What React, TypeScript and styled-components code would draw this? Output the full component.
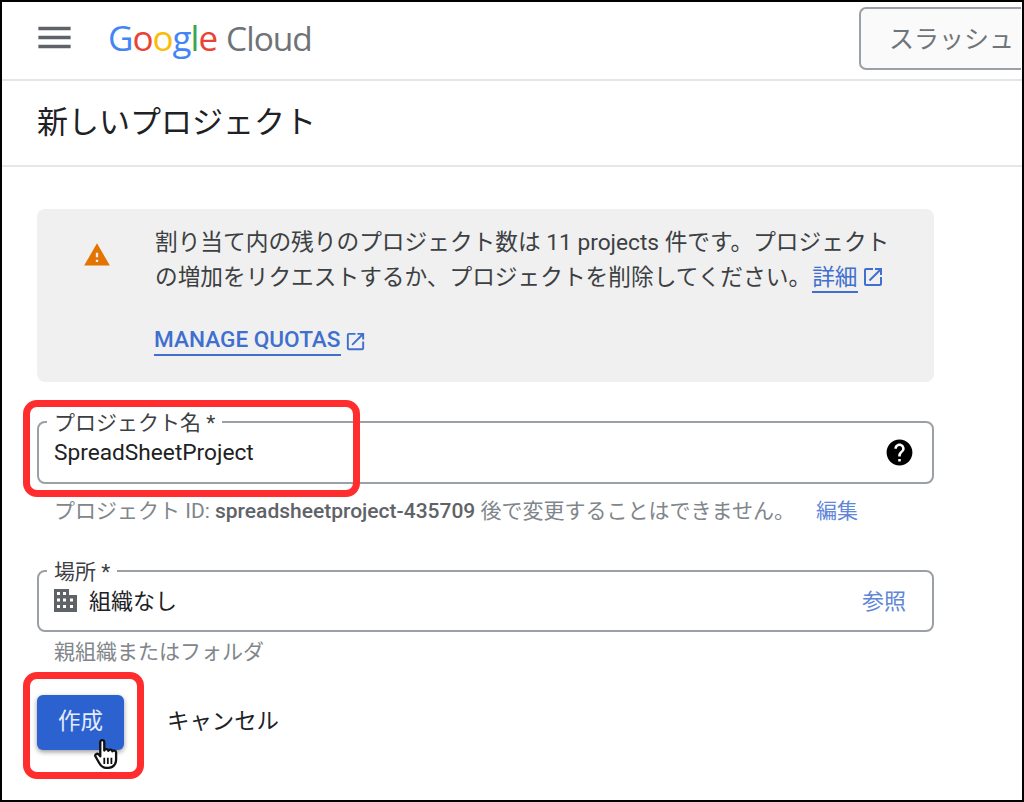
import styled, { createGlobalStyle } from "styled-components";

const GlobalStyle = createGlobalStyle`
  html, body {
    margin: 0;
    padding: 0;
    background: #fff;
  }
  * {
    box-sizing: border-box;
  }
`;

const MENU = "M3 18h18v-2H3v2zm0-5h18v-2H3v2zm0-7v2h18V6H3z";
const WARNING = "M1 21h22L12 2 1 21zm12-3h-2v-2h2v2zm0-4h-2v-4h2v4z";
const OPEN_NEW =
  "M19 19H5V5h7V3H5a2 2 0 0 0-2 2v14c0 1.1.89 2 2 2h14c1.1 0 2-.9 2-2v-7h-2v7zM14 3v2h3.59l-9.83 9.83 1.41 1.41L19 6.41V10h2V3h-7z";
const HELP =
  "M12 2C6.48 2 2 6.48 2 12s4.48 10 10 10 10-4.48 10-10S17.52 2 12 2zm1 17h-2v-2h2v2zm2.07-7.75l-.9.92C13.45 12.9 13 13.5 13 15h-2v-.5c0-1.1.45-2.1 1.17-2.83l1.24-1.26c.37-.36.59-.86.59-1.41 0-1.1-.9-2-2-2s-2 .9-2 2H8c0-2.21 1.79-4 4-4s4 1.79 4 4c0 .88-.36 1.68-.93 2.25z";

function Icon({ d, size, color }: { d: string; size: number; color: string }) {
  return (
    <svg width={size} height={size} viewBox="0 0 24 24" fill={color} style={{ display: "block", flexShrink: 0 }}>
      <path d={d} />
    </svg>
  );
}

// solid building, the windows are punched out of the two blocks
function BuildingIcon() {
  return (
    <BuildingSvg width="25" height="25" viewBox="0 0 25 25">
      <path
        fillRule="evenodd"
        fill="#5f6368"
        d="M1 1h15v6h8v17H1zM4 4v3h3V4zM10 4v3h3V4zM4 10.500v3h3v-3zM10 10.500v3h3v-3zM4 17v3h3v-3zM10 17v3h3v-3zM17 10.500v3h3v-3zM17 17v3h3v-3z"
      />
    </BuildingSvg>
  );
}

function HandCursor() {
  return (
    <svg width="27" height="32" viewBox="0 0 30 36">
      <path
        d="M8 3.500c0-3 4.500-3 4.500 0V13c.6-2.200 4.300-2.200 4.600.3.800-1.900 4.200-1.700 4.500.6 1-1.500 4.200-1 4.200 1.400V23c0 5-3 9.500-8.500 9.500h-2.500c-4 0-6-2-8-5.500l-4-7c-1.500-2.500 1.500-4.500 3.500-2.500L8 19.500z"
        fill="#fff"
        stroke="#111"
        strokeWidth="2.600"
        strokeLinejoin="round"
      />
      <path d="M12.500 21v7M16.500 21v7M20.500 21v7" stroke="#111" strokeWidth="2" />
    </svg>
  );
}

export default function App() {
  return (
    <>
      <GlobalStyle />
      <Frame>
        <Header>
          <MenuButton>
            <Icon d={MENU} size={43} color="#5f6368" />
          </MenuButton>
          <Logo>
            <Letter $c="#4285f4">G</Letter>
            <Letter $c="#ea4335">o</Letter>
            <Letter $c="#fbbc04">o</Letter>
            <Letter $c="#4285f4">g</Letter>
            <Letter $c="#34a853">l</Letter>
            <Letter $c="#ea4335">e</Letter>
            <CloudWord>Cloud</CloudWord>
          </Logo>
          <SearchBox>スラッシュ</SearchBox>
        </Header>
        <TitleBar>新しいプロジェクト</TitleBar>
        <Content>
          <Alert>
            <AlertIcon>
              <Icon d={WARNING} size={28} color="#e37400" />
            </AlertIcon>
            <AlertBody>
              <AlertText>
                割り当て内の残りのプロジェクト数は 11 projects 件です。プロジェクト
                <br />
                の増加をリクエストするか、プロジェクトを削除してください。
                <TextLink>詳細</TextLink>
                <InlineIcon>
                  <Icon d={OPEN_NEW} size={24} color="#3f6fcf" />
                </InlineIcon>
              </AlertText>
              <QuotaRow>
                <QuotaLink>MANAGE QUOTAS</QuotaLink>
                <Icon d={OPEN_NEW} size={23} color="#3f6fcf" />
              </QuotaRow>
            </AlertBody>
          </Alert>

          <FieldWrap $top={39}>
            <Highlight $left={-14} $top={-21} $width={337} $height={97} />
            <Field>
              <FieldLabel>プロジェクト名 *</FieldLabel>
              <FieldValue>SpreadSheetProject</FieldValue>
              <Icon d={HELP} size={31} color="#000" />
            </Field>
          </FieldWrap>
          <Helper $top={13}>
            プロジェクト ID: <strong>spreadsheetproject-435709</strong> 後で変更することはできません。
            <EditLink>編集</EditLink>
          </Helper>

          <FieldWrap $top={45}>
            <Field $pad>
              <FieldLabel>場所 *</FieldLabel>
              <BuildingIcon />
              <FieldValue $cjk>組織なし</FieldValue>
              <BrowseLink>参照</BrowseLink>
            </Field>
          </FieldWrap>
          <Helper $top={6}>親組織またはフォルダ</Helper>

          <Actions>
            <Highlight $left={-14} $top={-23} $width={121} $height={107} />
            <CreateButton>作成</CreateButton>
            <CancelButton>キャンセル</CancelButton>
            <Cursor>
              <HandCursor />
            </Cursor>
          </Actions>
        </Content>
      </Frame>
    </>
  );
}

const BuildingSvg = styled.svg`
  display: block;
  flex-shrink: 0;
  margin: 4px 0 0 -1px;
`;

const Frame = styled.div`
  width: 1024px;
  height: 802px;
  border: 2px solid #000;
  overflow: hidden;
  background: #fff;
  font-family: Roboto, "Noto Sans CJK JP", sans-serif;
  color: #202124;
`;

const Header = styled.header`
  height: 79px;
  display: flex;
  align-items: center;
  border-bottom: 2px solid #e6e6e6;
  padding-left: 31px;
`;

const MenuButton = styled.div`
  width: 43px;
  margin-right: 32px;
  margin-top: -7px;
`;

const Logo = styled.div`
  display: flex;
  align-items: baseline;
  font-family: "Open Sans", sans-serif;
  font-size: 35px;
  letter-spacing: -1px;
  margin-top: -6px;
  width: 207px;
  flex-shrink: 0;
  white-space: nowrap;
`;

const Letter = styled.span<{ $c: string }>`
  color: ${(p) => p.$c};
`;

const CloudWord = styled.span`
  color: #6f7377;
  font-size: 33.5px;
  margin-left: 9px;
`;

const SearchBox = styled.div`
  margin-left: 544px;
  width: 162px;
  flex-shrink: 0;
  height: 63px;
  margin-top: -4px;
  border: 2px solid #9aa0a6;
  border-right: none;
  border-radius: 7px 0 0 7px;
  background: #fafafa;
  display: flex;
  align-items: center;
  padding: 0 0 4px 28px;
  font-size: 25px;
  color: #70757a;
  white-space: nowrap;
`;

const TitleBar = styled.div`
  height: 86px;
  display: flex;
  align-items: center;
  padding-left: 35px;
  border-bottom: 2px solid #e6e6e6;
  font-size: 31px;
  color: #202124;
  padding-bottom: 8px;
`;

const Content = styled.main`
  padding: 42px 0 0 35px;
  width: 932px;
`;

const Alert = styled.section`
  height: 173px;
  border-radius: 8px;
  background: #f0f0f0;
  display: flex;
`;

const AlertIcon = styled.div`
  width: 118px;
  padding: 32px 0 0 46px;
`;

const AlertBody = styled.div`
  padding-top: 16px;
`;

const AlertText = styled.p`
  margin: 0;
  font-size: 22.7px;
  line-height: 35px;
  color: #3c4043;
  white-space: nowrap;
`;

const TextLink = styled.span`
  color: #3f6fcf;
  border-bottom: 2px solid #3f6fcf;
  margin-left: 1px;
`;

const InlineIcon = styled.span`
  display: inline-block;
  vertical-align: -4px;
  margin-left: 3px;
`;

const QuotaRow = styled.div`
  display: flex;
  align-items: center;
  gap: 3px;
  margin-top: 31px;
  margin-left: -1px;
  color: #3f6fcf;
`;

const QuotaLink = styled.span`
  font-size: 22.6px;
  font-weight: 500;
  line-height: 28px;
  border-bottom: 2px solid #3f6fcf;
`;

const FieldWrap = styled.div<{ $top: number }>`
  position: relative;
  margin-top: ${(p) => p.$top}px;
`;

const Field = styled.div<{ $pad?: boolean }>`
  position: relative;
  height: ${(p) => (p.$pad ? 62 : 63)}px;
  border: 2px solid #9aa0a6;
  border-radius: 8px;
  display: flex;
  align-items: center;
  padding: 0 ${(p) => (p.$pad ? 26 : 17)}px ${(p) => (p.$pad ? 5 : 0)}px 15px;
`;

const FieldLabel = styled.span`
  position: absolute;
  left: 8px;
  top: -12px;
  padding: 0 7px;
  background: #fff;
  font-size: 21px;
  line-height: 24px;
  color: #3c4043;
`;

const FieldValue = styled.span<{ $cjk?: boolean }>`
  flex: 1;
  font-size: ${(p) => (p.$cjk ? 22 : 22.7)}px;
  color: #202124;
  margin-left: ${(p) => (p.$cjk ? 11 : 0)}px;
`;

const BrowseLink = styled.span`
  font-size: 22px;
  color: #5f86d8;
`;

const Helper = styled.div<{ $top: number }>`
  margin-top: ${(p) => p.$top}px;
  padding-left: 17px;
  font-size: 21px;
  line-height: 28px;
  color: #80868b;
  white-space: nowrap;
  strong {
    font-weight: 500;
    color: #5f6368;
  }
`;

const EditLink = styled.span`
  color: #5f86d8;
  font-size: 21px;
  margin-left: 21px;
`;

const Actions = styled.div`
  position: relative;
  display: flex;
  align-items: center;
  margin-top: 29px;
`;

const CreateButton = styled.div`
  width: 87px;
  height: 55px;
  border-radius: 6px;
  background: #2b62d0;
  color: #e4ecfb;
  font-size: 22.5px;
  display: flex;
  align-items: center;
  justify-content: center;
  padding-bottom: 8px;
  box-shadow: 0 2px 5px rgba(0, 0, 0, 0.4);
`;

const CancelButton = styled.div`
  margin-left: 43px;
  margin-top: -8px;
  font-size: 22.4px;
  color: #202124;
`;

const Cursor = styled.div`
  position: absolute;
  left: 56px;
  top: 44px;
`;

const Highlight = styled.div<{ $left: number; $top: number; $width: number; $height: number }>`
  position: absolute;
  left: ${(p) => p.$left}px;
  top: ${(p) => p.$top}px;
  width: ${(p) => p.$width}px;
  height: ${(p) => p.$height}px;
  border: 7px solid #ff2d2d;
  border-radius: 14px;
  z-index: 2;
  pointer-events: none;
`;
